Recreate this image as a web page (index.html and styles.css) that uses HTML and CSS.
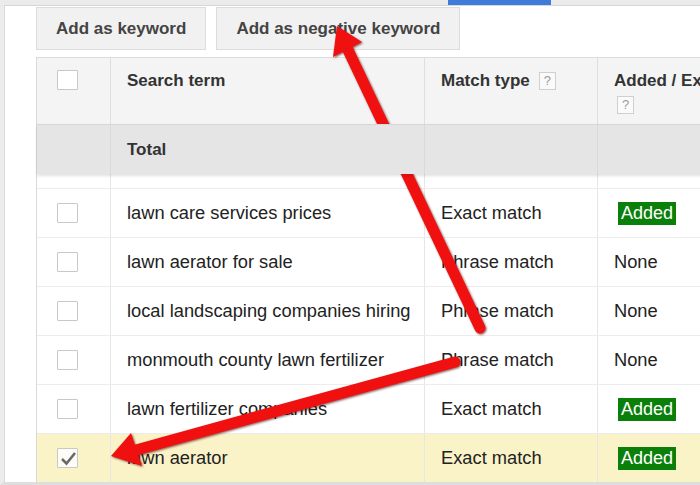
FILE: index.html
```html
<!DOCTYPE html>
<html lang="en">
<head>
<meta charset="utf-8">
<title>Search terms</title>
<link rel="stylesheet" href="styles.css">
</head>
<body>
<div class="page">
  <div class="topbar"><div class="tab-active"></div></div>
  <div class="content">
    <div class="toolbar">
      <button class="btn">Add as keyword</button>
      <button class="btn">Add as negative keyword</button>
    </div>
    <div class="grid">
      <div class="row head">
        <div class="cell check"><span class="box"></span></div>
        <div class="cell">Search term</div>
        <div class="cell">Match type <span class="help">?</span></div>
        <div class="cell">Added / Excluded <span class="help">?</span></div>
      </div>
      <div class="row total">
        <div class="cell check"></div>
        <div class="cell">Total</div>
        <div class="cell"></div>
        <div class="cell"></div>
      </div>
      <div class="row spacer">
        <div class="cell check"></div><div class="cell"></div><div class="cell"></div><div class="cell"></div>
      </div>
      <div class="row data">
        <div class="cell check"><span class="box"></span></div>
        <div class="cell">lawn care services prices</div>
        <div class="cell">Exact match</div>
        <div class="cell"><span class="badge">Added</span></div>
      </div>
      <div class="row data">
        <div class="cell check"><span class="box"></span></div>
        <div class="cell">lawn aerator for sale</div>
        <div class="cell">Phrase match</div>
        <div class="cell">None</div>
      </div>
      <div class="row data">
        <div class="cell check"><span class="box"></span></div>
        <div class="cell">local landscaping companies hiring</div>
        <div class="cell">Phrase match</div>
        <div class="cell">None</div>
      </div>
      <div class="row data">
        <div class="cell check"><span class="box"></span></div>
        <div class="cell">monmouth county lawn fertilizer</div>
        <div class="cell">Phrase match</div>
        <div class="cell">None</div>
      </div>
      <div class="row data">
        <div class="cell check"><span class="box"></span></div>
        <div class="cell">lawn fertilizer companies</div>
        <div class="cell">Exact match</div>
        <div class="cell"><span class="badge">Added</span></div>
      </div>
      <div class="row data selected">
        <div class="cell check"><span class="box"><svg class="tick" viewBox="0 0 20 19" width="20" height="19"><path d="M4 10 L8.5 14.5 L17 4" fill="none" stroke="#6a6a6a" stroke-width="2.6"/></svg></span></div>
        <div class="cell">lawn aerator</div>
        <div class="cell">Exact match</div>
        <div class="cell"><span class="badge">Added</span></div>
      </div>
    </div>
  </div>
</div>
<svg class="arrows" width="700" height="485" viewBox="0 0 700 485">
  <g class="arrow">
    <line x1="480" y1="328" x2="348" y2="50" stroke="#f01010" stroke-width="11" stroke-linecap="round"/>
    <polygon points="337,26 362,42 333,57" fill="#f01010"/>
  </g>
  <g class="arrow">
    <line x1="455" y1="362" x2="136" y2="450" stroke="#f01010" stroke-width="11" stroke-linecap="round"/>
    <polygon points="111,456 131,433 142,466" fill="#f01010"/>
  </g>
</svg>
</body>
</html>
```
FILE: styles.css
```css
html, body {
  margin: 0;
  padding: 0;
}
body {
  width: 700px;
  height: 485px;
  overflow: hidden;
  position: relative;
  background: #fff;
  font-family: "Liberation Sans", Arial, sans-serif;
  color: #222;
}
.page {
  height: 485px;
  box-sizing: border-box;
  border-left: 4px solid #ececec;
  border-bottom: 3px solid #dedede;
  display: flex;
  flex-direction: column;
  overflow: hidden;
}
.topbar {
  height: 5px;
  flex: none;
  background: #ebebeb;
  border-bottom: 1px solid #d6d6d6;
}
.tab-active {
  margin-left: 444px;
  width: 103px;
  height: 5px;
  background: #3f7bd8;
}
.content {
  flex: 1;
  border-left: 1px solid #dadada;
  padding-left: 31px;
  overflow: hidden;
}
.toolbar {
  display: flex;
  gap: 10px;
  margin-top: 1px;
  margin-bottom: 7px;
}
.btn {
  height: 43px;
  padding: 0 19px;
  background: #f1f1f1;
  border: 1px solid #dcdcdc;
  font-family: "Liberation Sans", Arial, sans-serif;
  font-weight: bold;
  font-size: 17px;
  color: #444;
  white-space: nowrap;
}
.grid {
  width: 740px;
  border-left: 1px solid #d9d9d9;
}
.row {
  display: grid;
  grid-template-columns: 73px 314px 173px 178px;
  box-sizing: border-box;
}
.cell {
  box-sizing: border-box;
  border-left: 1px solid #e6e6e6;
  padding-left: 16px;
  display: flex;
  align-items: center;
}
.cell.check {
  border-left: none;
  padding-left: 20px;
}
.head {
  height: 67px;
  background: #f4f4f4;
  border-top: 1px solid #dcdcdc;
  font-weight: bold;
  font-size: 17px;
  color: #333;
}
.head .cell {
  align-items: flex-start;
  padding-top: 12px;
  line-height: 22px;
  flex-wrap: wrap;
  align-content: flex-start;
  column-gap: 6px;
  row-gap: 2px;
  border-left-color: #dedede;
}
.head .cell.check {
  padding-top: 12px;
}
.help {
  display: inline-block;
  width: 17px;
  height: 18px;
  margin-top: 2px;
  margin-left: 3px;
  box-sizing: border-box;
  border: 1px solid #cfcfcf;
  background: #fafafa;
  color: #9a9a9a;
  font-size: 13px;
  font-weight: normal;
  line-height: 16px;
  text-align: center;
}
.total {
  height: 50px;
  background: #e5e5e5;
  border-top: 1px solid #d6d6d6;
  font-weight: bold;
  font-size: 17px;
  color: #333;
  position: relative;
  z-index: 1;
  box-shadow: 0 2px 3px rgba(0, 0, 0, 0.12);
}
.total .cell {
  border-left-color: #dadada;
}
.spacer {
  height: 14px;
}
.data {
  height: 49px;
  border-top: 1px solid #ececec;
  font-size: 18.3px;
  color: #222;
}
.data .cell {
  white-space: nowrap;
}
.selected {
  background: #fbf3c8;
}
.box {
  display: inline-block;
  width: 21px;
  height: 20px;
  box-sizing: border-box;
  border: 1px solid #c8c8c8;
  background: #fff;
  border-radius: 1px;
}
.selected .box {
  background: #fdfcf6;
}
.tick {
  display: block;
}
.badge {
  display: inline-block;
  background: #0a7f0a;
  color: #fff;
  font-size: 18px;
  line-height: 23px;
  padding: 0 3px;
  margin-left: 4px;
}
.arrows {
  position: absolute;
  left: 0;
  top: 0;
  pointer-events: none;
}
.arrow {
  filter: drop-shadow(1.5px 1.5px 1px rgba(70, 0, 0, 0.65));
}
```
